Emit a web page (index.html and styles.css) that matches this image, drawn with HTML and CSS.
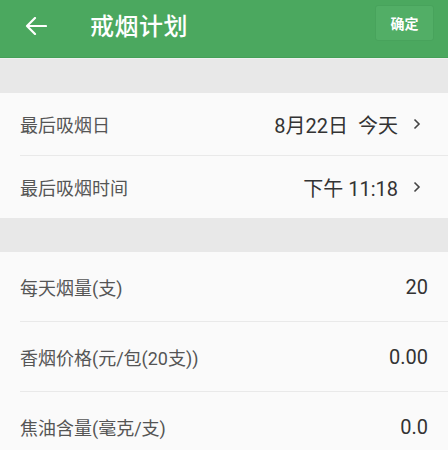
FILE: index.html
```html
<!DOCTYPE html>
<html lang="zh">
<head>
<meta charset="utf-8">
<title>戒烟计划</title>
<link rel="stylesheet" href="styles.css">
</head>
<body>
<header class="bar">
  <svg class="back" width="22" height="18" viewBox="0 0 22 18"><path d="M21 9H2M10 1L2 9l8 8" fill="none" stroke="#fff" stroke-width="2.2" stroke-linecap="round" stroke-linejoin="round"/></svg>
  <h1 class="title">戒烟计划</h1>
  <button class="ok">确定</button>
</header>
<div class="gap"></div>
<section class="group">
  <div class="row short">
    <span class="label">最后吸烟日</span>
    <span class="value">8月22日&nbsp;&nbsp;今天</span>
    <svg class="chev" width="8" height="12" viewBox="0 0 8 12"><path d="M1.5 1.5l4.5 4.5-4.5 4.5" fill="none" stroke="#444" stroke-width="1.6"/></svg>
  </div>
  <div class="row short">
    <span class="label">最后吸烟时间</span>
    <span class="value">下午 11:18</span>
    <svg class="chev" width="8" height="12" viewBox="0 0 8 12"><path d="M1.5 1.5l4.5 4.5-4.5 4.5" fill="none" stroke="#444" stroke-width="1.6"/></svg>
  </div>
</section>
<div class="gap"></div>
<section class="group">
  <div class="row tall">
    <span class="label">每天烟量(支)</span>
    <span class="value">20</span>
  </div>
  <div class="row tall">
    <span class="label">香烟价格(元/包(20支))</span>
    <span class="value">0.00</span>
  </div>
  <div class="row tall">
    <span class="label">焦油含量(毫克/支)</span>
    <span class="value">0.0</span>
  </div>
</section>
</body>
</html>
```
FILE: styles.css
```css
html, body {
  margin: 0;
  padding: 0;
  background: #e8e8e8;
  font-family: Roboto, "Noto Sans CJK SC", sans-serif;
}
.bar {
  height: 57px;
  background: #4ba85f;
  border-bottom: 1px solid #45a058;
  box-shadow: 0 1px 0 #f0f0f0;
  display: flex;
  align-items: center;
  padding: 0 14px 0 25px;
  box-sizing: content-box;
}
.back {
  display: block;
  margin-top: -5px;
}
.title {
  margin: 0 0 0 43px;
  color: #fff;
  font-size: 24px;
  font-weight: 500;
  margin-top: -9px;
  flex: 1;
  letter-spacing: 0.5px;
}
.ok {
  width: 59px;
  height: 36px;
  margin-top: -11px;
  background: #52ae66;
  border: 1px solid #48a35c;
  border-radius: 3px;
  color: #fff;
  font-family: "Noto Sans CJK SC", sans-serif;
  font-size: 14px;
  font-weight: 700;
  padding: 0;
}
.gap {
  height: 34px;
}
.bar + .gap {
  height: 34px;
  margin-top: 1px;
}
.group {
  background: #fafafa;
  padding-left: 20px;
}
.row {
  display: flex;
  align-items: center;
  padding-right: 20px;
  border-top: 1px solid #e9e9e9;
}
.row:first-child {
  border-top: none;
}
.short { height: 62px; }
.tall { height: 69px; }
.label {
  flex: 1;
  font-size: 18px;
  color: #555;
}
.value {
  font-size: 20px;
  color: #333;
}
.chev {
  margin-left: 15px;
  margin-right: 7px;
  display: block;
}
```
